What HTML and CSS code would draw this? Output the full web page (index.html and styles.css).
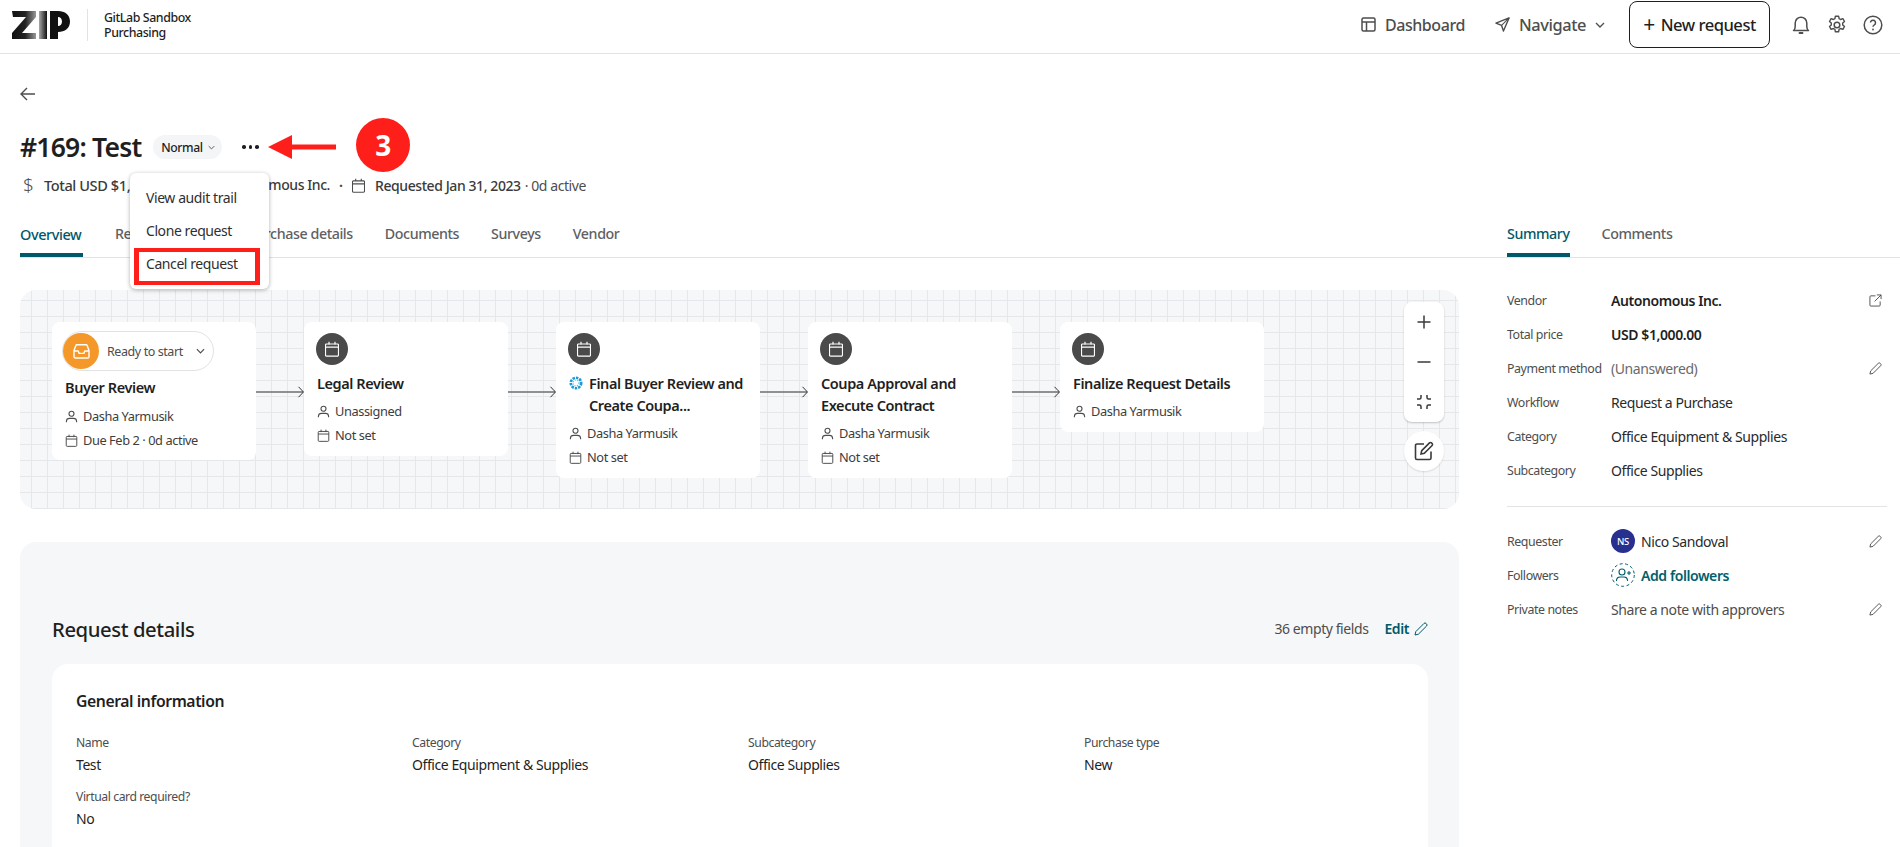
FILE: index.html
```html
<!DOCTYPE html>
<html lang="en">
<head>
<meta charset="utf-8">
<title>#169: Test</title>
<link rel="stylesheet" href="styles.css">
</head>
<body>
<svg class="sprite" aria-hidden="true">
  <defs>
    <linearGradient id="zipA" x1="0" y1="0" x2="1" y2="0"><stop offset="0" stop-color="#111"/><stop offset=".55" stop-color="#222"/><stop offset="1" stop-color="#999"/></linearGradient>
    <linearGradient id="zipB" x1="0" y1="0" x2="1" y2="0"><stop offset="0" stop-color="#aaa"/><stop offset="1" stop-color="#111"/></linearGradient>
    <symbol id="cal" viewBox="0 0 14 16"><path d="M1.5 3h11a1 1 0 0 1 1 1v10a1.2 1.2 0 0 1-1.2 1.2H1.7A1.2 1.2 0 0 1 .5 14V4a1 1 0 0 1 1-1zM.5 6.2h13M4 .8v3M10 .8v3" fill="none" stroke="currentColor" stroke-width="1.2"/></symbol>
    <symbol id="person" viewBox="0 0 14 14"><circle cx="7" cy="4" r="2.7" fill="none" stroke="currentColor" stroke-width="1.2"/><path d="M1.5 13.2v-1a3.4 3.4 0 0 1 3.4-3.2h4.2a3.4 3.4 0 0 1 3.4 3.2v1" fill="none" stroke="currentColor" stroke-width="1.2"/></symbol>
    <symbol id="pencil" viewBox="0 0 14 14"><path d="M1 13l.8-3.4L10 1.4a1.4 1.4 0 0 1 2 0l.6.6a1.4 1.4 0 0 1 0 2L4.400 12.200z" fill="none" stroke="currentColor" stroke-width="1"/></symbol>
    <symbol id="chev" viewBox="0 0 10 6"><path d="M1 1l4 4 4-4" fill="none" stroke="currentColor" stroke-width="1.300"/></symbol>
    <symbol id="flow" viewBox="0 0 48 12"><path d="M0 6h47" stroke="#6e6e6e" stroke-width="1.500"/><path d="M42.500 .8L47.500 6l-5 5.200" fill="none" stroke="#333" stroke-width="1"/></symbol>
  </defs>
</svg>

<div class="app">
  <header class="topbar">
    <div class="brand">
      <svg class="logo" viewBox="0 0 58 28" role="img" aria-label="Zip">
        <path d="M0 0h24v6L10 22h14v6H0v-6L14 6H1z" fill="url(#zipA)"/>
        <rect x="27" y="0" width="8" height="28" fill="url(#zipB)"/>
        <path d="M38 0h8c7 0 12 4 12 10.500S53 21 46 21v-6c2.500 0 4-1.800 4-4.500S48.500 6 46 6v22h-8z" fill="#111"/>
      </svg>
      <div class="org">
        <span>GitLab Sandbox</span>
        <span>Purchasing</span>
      </div>
    </div>
    <nav class="topnav">
      <a class="navlink navlink-dash">
        <svg class="ic15" viewBox="0 0 15 15"><rect x="1" y="1" width="13" height="13" rx="1.500" fill="none" stroke="currentColor" stroke-width="1.500"/><path d="M1 5h13M5.500 5v9" fill="none" stroke="currentColor" stroke-width="1.500"/></svg>
        Dashboard
      </a>
      <a class="navlink navlink-nav">
        <svg class="ic15" viewBox="0 0 16 16"><path d="M15 1L1 6.500l6 2.500 2 6z" fill="none" stroke="currentColor" stroke-width="1.500" stroke-linejoin="round"/><path d="M7 9l8-8" stroke="currentColor" stroke-width="1.200"/></svg>
        Navigate
        <svg class="chev-nav"><use href="#chev"/></svg>
      </a>
      <button class="newreq"><span class="plus">+</span>New request</button>
      <div class="tools">
        <svg class="tool" viewBox="0 0 20 20"><path d="M2.500 15.500c1.300-1 1.700-2.300 1.700-4V8a5.800 5.800 0 0 1 11.600 0v3.500c0 1.700.4 3 1.700 4z" fill="none" stroke="currentColor" stroke-width="1.500" stroke-linejoin="round"/><path d="M8.500 18h3" stroke="currentColor" stroke-width="1.800" stroke-linecap="round"/></svg>
        <svg class="tool" viewBox="0 0 20 20"><circle cx="10" cy="10" r="2.800" fill="none" stroke="currentColor" stroke-width="1.500"/><path d="M8.400 1.200h3.200l.5 2.400 1.500.9 2.300-.8 1.600 2.800-1.800 1.600v1.800l1.800 1.600-1.600 2.800-2.300-.8-1.500.9-.5 2.400H8.400l-.5-2.400-1.500-.9-2.300.8-1.600-2.800 1.800-1.600V8.100L2.500 6.500l1.600-2.800 2.300.8 1.500-.9z" fill="none" stroke="currentColor" stroke-width="1.400" stroke-linejoin="round"/></svg>
        <svg class="tool" viewBox="0 0 20 20"><circle cx="10" cy="10" r="8.800" fill="none" stroke="currentColor" stroke-width="1.500"/><path d="M7.500 7.600a2.500 2.500 0 1 1 3.800 2.200c-.9.500-1.300 1-1.300 2" fill="none" stroke="currentColor" stroke-width="1.500"/><circle cx="10" cy="14.500" r=".9" fill="currentColor"/></svg>
      </div>
    </nav>
  </header>

  <section class="head">
    <div class="back">
      <svg class="back-ic" viewBox="0 0 16 14"><path d="M15 7H1.500M7 1L1 7l6 6" fill="none" stroke="currentColor" stroke-width="1.400"/></svg>
    </div>
    <div class="titlerow">
      <h1 class="title">#169: Test</h1>
      <span class="priority">Normal<svg class="chev-sm"><use href="#chev"/></svg></span>
      <span class="dots"><i></i><i></i><i></i></span>
    </div>
    <div class="meta">
      <span class="dollar">$</span>
      <b class="meta-total"><span class="meta-total-a">Total USD $1,000.00</span><span class="meta-total-b">Autonomous Inc.</span></b>
      <span class="meta-sep">·</span>
      <svg class="meta-cal"><use href="#cal"/></svg>
      <b>Requested Jan 31, 2023</b>
      <span class="meta-age">· 0d active</span>
    </div>
  </section>

  <div class="tabbar">
    <div class="tabs">
      <a class="tab tab-first active">Overview</a>
      <a class="tab tab-hidden">Request form</a>
      <a class="tab">Purchase details</a>
      <a class="tab">Documents</a>
      <a class="tab">Surveys</a>
      <a class="tab">Vendor</a>
    </div>
    <div class="tabs">
      <a class="tab active">Summary</a>
      <a class="tab">Comments</a>
    </div>
  </div>

  <div class="columns">
    <main class="maincol">
      <section class="canvas">
        <article class="node node-first">
          <div class="status">
            <span class="status-ic">
              <svg class="inbox" viewBox="0 0 18 16"><path d="M1 7l2-5.500a1 1 0 0 1 1-.7h10a1 1 0 0 1 1 .7L17 7v6.500a1.500 1.500 0 0 1-1.500 1.500h-13A1.500 1.500 0 0 1 1 13.500zM1 7.500h4.500l1 2.500h5l1-2.500H17" fill="none" stroke="#fff" stroke-width="1.500" stroke-linejoin="round"/></svg>
            </span>
            <span class="status-txt">Ready to start</span>
            <svg class="chev-status"><use href="#chev"/></svg>
          </div>
          <h3 class="node-title">Buyer Review</h3>
          <div class="row"><svg class="row-ic"><use href="#person"/></svg>Dasha Yarmusik</div>
          <div class="row"><svg class="row-ic"><use href="#cal"/></svg>Due Feb 2 · 0d active</div>
        </article>
        <svg class="link"><use href="#flow"/></svg>
        <article class="node">
          <span class="badge"><svg class="badge-ic"><use href="#cal"/></svg></span>
          <h3 class="node-title">Legal Review</h3>
          <div class="row"><svg class="row-ic"><use href="#person"/></svg>Unassigned</div>
          <div class="row"><svg class="row-ic"><use href="#cal"/></svg>Not set</div>
        </article>
        <svg class="link"><use href="#flow"/></svg>
        <article class="node">
          <span class="badge"><svg class="badge-ic"><use href="#cal"/></svg></span>
          <div class="title-logo">
            <svg class="coupa" viewBox="0 0 14 14"><circle cx="7" cy="7" r="5.200" fill="none" stroke="#1c9ad6" stroke-width="2.600" stroke-dasharray="2.400 1.000"/><circle cx="7" cy="7" r="3" fill="none" stroke="#5cc0ea" stroke-width="1.200" stroke-dasharray="1.200 1.300"/></svg>
            <h3 class="node-title node-title-flush">Final Buyer Review and Create Coupa...</h3>
          </div>
          <div class="row"><svg class="row-ic"><use href="#person"/></svg>Dasha Yarmusik</div>
          <div class="row"><svg class="row-ic"><use href="#cal"/></svg>Not set</div>
        </article>
        <svg class="link"><use href="#flow"/></svg>
        <article class="node">
          <span class="badge"><svg class="badge-ic"><use href="#cal"/></svg></span>
          <h3 class="node-title">Coupa Approval and Execute Contract</h3>
          <div class="row"><svg class="row-ic"><use href="#person"/></svg>Dasha Yarmusik</div>
          <div class="row"><svg class="row-ic"><use href="#cal"/></svg>Not set</div>
        </article>
        <svg class="link"><use href="#flow"/></svg>
        <article class="node">
          <span class="badge"><svg class="badge-ic"><use href="#cal"/></svg></span>
          <h3 class="node-title">Finalize Request Details</h3>
          <div class="row"><svg class="row-ic"><use href="#person"/></svg>Dasha Yarmusik</div>
        </article>

        <div class="controls">
          <div class="zoomers">
            <svg class="ctl" viewBox="0 0 16 16"><path d="M8 1.500v13M1.500 8h13" stroke="currentColor" stroke-width="1.500"/></svg>
            <svg class="ctl" viewBox="0 0 16 16"><path d="M1.500 8h13" stroke="currentColor" stroke-width="1.500"/></svg>
            <svg class="ctl" viewBox="0 0 16 16"><path d="M1 5h2.500a1.500 1.500 0 0 0 1.500-1.500V1M15 5h-2.500A1.500 1.500 0 0 1 11 3.500V1M1 11h2.500A1.500 1.500 0 0 1 5 12.500V15M15 11h-2.500a1.500 1.500 0 0 0-1.500 1.500V15" fill="none" stroke="currentColor" stroke-width="1.500"/></svg>
          </div>
          <div class="editfab">
            <svg class="ctl-edit" viewBox="0 0 20 20"><path d="M10 3H3a1.500 1.500 0 0 0-1.500 1.500V17A1.500 1.500 0 0 0 3 18.500h12.500A1.500 1.500 0 0 0 17 17v-6.500" fill="none" stroke="currentColor" stroke-width="1.600"/><path d="M7 13l.7-3.300L15.500 1.900a1.400 1.400 0 0 1 2 0l.6.600a1.400 1.400 0 0 1 0 2l-7.800 7.800z" fill="none" stroke="currentColor" stroke-width="1.600"/></svg>
          </div>
        </div>
      </section>

      <section class="details">
        <div class="details-head">
          <h2 class="details-title">Request details</h2>
          <div class="details-tools">
            <span class="empty">36 empty fields</span>
            <a class="edit">Edit<svg class="ic-edit"><use href="#pencil"/></svg></a>
          </div>
        </div>
        <div class="infocard">
          <h3 class="info-title">General information</h3>
          <div class="fields">
            <div class="field"><span class="f-label">Name</span><span class="f-value">Test</span></div>
            <div class="field"><span class="f-label">Category</span><span class="f-value">Office Equipment &amp; Supplies</span></div>
            <div class="field"><span class="f-label">Subcategory</span><span class="f-value">Office Supplies</span></div>
            <div class="field"><span class="f-label">Purchase type</span><span class="f-value">New</span></div>
            <div class="field"><span class="f-label">Virtual card required?</span><span class="f-value">No</span></div>
          </div>
        </div>
      </section>
    </main>

    <aside class="side">
      <dl class="sum">
        <div class="sum-row"><dt>Vendor</dt><dd class="strong">Autonomous Inc.</dd>
          <svg class="sum-ic" viewBox="0 0 14 14"><path d="M7 2H2a1 1 0 0 0-1 1v9a1 1 0 0 0 1 1h9a1 1 0 0 0 1-1V8M6 8l7-7M8.500 1H13v4.500" fill="none" stroke="currentColor" stroke-width="1"/></svg>
        </div>
        <div class="sum-row"><dt>Total price</dt><dd class="strong">USD $1,000.00</dd></div>
        <div class="sum-row"><dt>Payment method</dt><dd class="muted">(Unanswered)</dd><svg class="sum-ic"><use href="#pencil"/></svg></div>
        <div class="sum-row"><dt>Workflow</dt><dd>Request a Purchase</dd></div>
        <div class="sum-row"><dt>Category</dt><dd>Office Equipment &amp; Supplies</dd></div>
        <div class="sum-row"><dt>Subcategory</dt><dd>Office Supplies</dd></div>
      </dl>
      <hr class="rule">
      <dl class="sum">
        <div class="sum-row"><dt>Requester</dt><dd class="with-av"><span class="avatar">NS</span>Nico Sandoval</dd><svg class="sum-ic"><use href="#pencil"/></svg></div>
        <div class="sum-row"><dt>Followers</dt><dd class="with-av addf">
          <svg class="avatar-add" viewBox="0 0 24 24"><circle cx="12" cy="12" r="11.300" fill="none" stroke="#00606b" stroke-width="1" stroke-dasharray="3 2.500"/><circle cx="11" cy="9" r="3" fill="none" stroke="#00606b" stroke-width="1.100"/><path d="M5.500 18v-1a3.500 3.500 0 0 1 3.500-3h4a3.500 3.500 0 0 1 3.500 3v1M16 10h4M18 8v4" fill="none" stroke="#00606b" stroke-width="1.100"/></svg>
          Add followers</dd></div>
        <div class="sum-row"><dt>Private notes</dt><dd class="note">Share a note with approvers</dd><svg class="sum-ic"><use href="#pencil"/></svg></div>
      </dl>
    </aside>
  </div>

  <div class="menu">
    <a class="menu-item">View audit trail</a>
    <a class="menu-item">Clone request</a>
    <a class="menu-item menu-hl">Cancel request</a>
  </div>

  <div class="callout">
    <svg class="callout-arrow" viewBox="0 0 68 24"><path d="M0 12L24 0v9.500h44v5H24V24z" fill="#ff1f1a"/></svg>
    <span class="callout-num">3</span>
  </div>
</div>
</body>
</html>
```
FILE: styles.css
```css
*, *::before, *::after { box-sizing: border-box; }
html, body { margin: 0; padding: 0; }
body {
  font-family: "Noto Sans", "Liberation Sans", sans-serif;
  color: #1f1f1f;
  background: #fff;
  font-size: 14px;
  letter-spacing: -0.03em;
}
.sprite { position: absolute; width: 0; height: 0; }
.app { position: relative; width: 1900px; height: 847px; overflow: hidden; }
h1, h2, h3, dl, dd { margin: 0; }
a { color: inherit; }

/* top bar */
.topbar {
  height: 54px;
  display: flex;
  justify-content: space-between;
  align-items: center;
  border-bottom: 1px solid #e2e3e5;
  padding: 0 17px 4px 12px;
}
.brand { display: flex; align-items: center; }
.logo { width: 58px; height: 28px; }
.org {
  margin-left: 17px;
  padding-left: 16px;
  border-left: 1px solid #e2e3e5;
  height: 32px;
  display: flex;
  flex-direction: column;
  justify-content: center;
  font-size: 12.400px;
  line-height: 15px;
  font-weight: 500;
}
.topnav { display: flex; align-items: center; }
.navlink {
  display: flex;
  align-items: center;
  font-size: 16.400px;
  font-weight: 500;
  color: #4d4d4d;
}
.navlink-dash { font-size: 16px; }
.ic15 { width: 15px; height: 15px; margin-right: 9px; }
.navlink-nav { margin-left: 30px; }
.chev-nav { width: 10px; height: 6px; margin-left: 9px; }
.newreq {
  margin-left: 24px;
  width: 141px;
  height: 47px;
  border: 1px solid #1f1f1f;
  border-radius: 8px;
  background: #fff;
  font: 500 16.600px "Noto Sans", sans-serif;
  letter-spacing: -0.03em;
  color: #1f1f1f;
  display: flex;
  align-items: center;
  justify-content: center;
  padding: 0;
}
.plus { font-size: 21px; margin-right: 6px; font-weight: 400; line-height: 1; }
.tools { display: flex; align-items: center; gap: 16px; margin-left: 21px; color: #4d4d4d; }
.tool { width: 20px; height: 20px; }

/* head */
.head { padding-left: 20px; }
.back { margin-top: 28px; height: 24px; display: flex; align-items: center; color: #4d4d4d; }
.back-ic { width: 16px; height: 14px; }
.titlerow { margin-top: 21px; height: 40px; display: flex; align-items: center; }
.title { font-size: 26.500px; font-weight: 600; line-height: 40px; letter-spacing: -0.03em; }
.priority {
  margin-left: 12px;
  height: 24px;
  width: 69px;
  border-radius: 12px;
  background: #f4f5f6;
  font-size: 12.200px;
  font-weight: 500;
  display: flex;
  align-items: center;
  justify-content: center;
}
.chev-sm { width: 7px; height: 5px; margin-left: 5px; color: #4d4d4d; }
.dots { margin-left: 20px; display: flex; gap: 3px; }
.dots i { width: 3.500px; height: 3.500px; border-radius: 50%; background: #1f1f1f; }
.meta {
  margin-top: 6px;
  height: 24px;
  display: flex;
  align-items: center;
  font-size: 14px;
  color: #4d4d4d;
}
.meta b { font-weight: 500; color: #3b3b3b; }
.dollar { font-size: 19px; font-weight: 300; width: 24px; padding-left: 3px; }
.meta-total { width: 286px; display: flex; justify-content: space-between; white-space: nowrap; }
.meta-total-a { font-size: 14.600px; }
.meta-sep { width: 22px; padding-left: 9px; font-weight: 700; }
.meta-cal { width: 13px; height: 15px; margin-right: 10px; }
.meta-age { margin-left: 4px; }

/* tabs */
.tabbar {
  margin: 19px 0 0 20px;
  height: 42px;
  display: grid;
  grid-template-columns: 1487px 1fr;
  border-bottom: 1px solid #e2e3e5;
}
.tabs { display: flex; gap: 32px; }
.tab {
  height: 41px;
  padding: 6px 0 7px;
  line-height: 24px;
  border-bottom: 4px solid transparent;
  font-size: 14.250px;
  font-weight: 500;
  color: #5f6062;
}
.tab.active { color: #00596a; border-bottom-color: #00596a; }
.tab-first { width: 63px; font-size: 14.500px; }
.tab-hidden { width: 101px; white-space: nowrap; overflow: hidden; }

/* columns */
.columns {
  display: grid;
  grid-template-columns: 1439px 380px;
  column-gap: 48px;
  padding-left: 20px;
}
.maincol { padding-top: 32px; }

/* canvas */
.canvas {
  position: relative;
  height: 219px;
  padding: 32px;
  display: flex;
  align-items: flex-start;
  border-radius: 16px;
  background-color: #f6f7f9;
  background-image:
    linear-gradient(to right, #e5e7ea 1px, transparent 1px),
    linear-gradient(to bottom, #e5e7ea 1px, transparent 1px);
  background-size: 16px 16px;
  background-position: 11px 10px;
}
.node {
  width: 204px;
  flex: none;
  padding: 11px 12px 9px 13px;
  background: #fff;
  border-radius: 8px;
}
.node-first { padding: 9px 12px 8px 13px; }
.link { width: 48px; height: 12px; flex: none; margin-top: 64px; }
.status {
  margin-left: -3px;
  width: 152px;
  height: 40px;
  display: flex;
  align-items: center;
  border: 1px solid #e1e2e4;
  border-radius: 20px;
  padding-left: 0;
}
.status-ic {
  width: 36px; height: 36px;
  border-radius: 50%;
  background: #f5982a;
  display: flex; align-items: center; justify-content: center;
}
.inbox { width: 17px; height: 15px; }
.status-txt { margin-left: 8px; font-size: 12.500px; color: #4d4d4d; white-space: nowrap; }
.chev-status { width: 9px; height: 6px; margin-left: 13px; color: #4d4d4d; }
.badge {
  margin-left: -1px;
  width: 32px; height: 32px;
  border-radius: 50%;
  background: #4a4a4a;
  color: #fff;
  display: flex; align-items: center; justify-content: center;
}
.badge-ic { width: 14px; height: 16px; }
.node-title {
  margin-top: 7px;
  font-size: 14.500px;
  line-height: 22px;
  font-weight: 600;
}
.node-first .node-title { margin-top: 5px; }
.node-first .node-title + .row { margin-top: 6px; }
.node-title-flush { margin-top: 0; }
.title-logo { margin-top: 7px; display: flex; gap: 6px; align-items: flex-start; }
.coupa { width: 14px; height: 14px; flex: none; margin-top: 4px; }
.row {
  height: 24px;
  display: flex;
  align-items: center;
  font-size: 12.800px;
  color: #3d3d3d;
  white-space: nowrap;
}
.node-title + .row, .title-logo + .row { margin-top: 5px; }
.row-ic { width: 13px; height: 13px; margin-right: 5px; flex: none; color: #4d4d4d; }

/* canvas controls */
.controls {
  position: absolute;
  top: 12px;
  right: 15px;
  width: 40px;
  display: flex;
  flex-direction: column;
  gap: 9px;
}
.zoomers {
  height: 120px;
  background: #fff;
  border-radius: 8px;
  box-shadow: 0 1px 2px rgba(0,0,0,.22);
  color: #3a3a3a;
  display: flex;
  flex-direction: column;
  align-items: center;
  justify-content: space-around;
}
.ctl { width: 16px; height: 16px; }
.editfab {
  height: 40px;
  border-radius: 50%;
  background: #fff;
  box-shadow: 0 1px 2px rgba(0,0,0,.12);
  color: #3a3a3a;
  display: flex; align-items: center; justify-content: center;
}
.ctl-edit { width: 20px; height: 20px; }

/* request details */
.details {
  margin-top: 33px;
  padding: 70px 31px 80px 32px;
  background: #f6f7f9;
  border-radius: 16px;
}
.details-head { height: 33px; display: flex; justify-content: space-between; align-items: center; }
.details-title { font-size: 20.300px; font-weight: 500; }
.details-tools { display: flex; align-items: center; font-size: 14px; }
.empty { color: #4d4d4d; }
.edit { margin-left: 16px; color: #00596a; font-weight: 600; display: flex; align-items: center; }
.ic-edit { width: 14px; height: 14px; margin-left: 5px; }
.infocard {
  margin-top: 19px;
  padding: 25px 24px 120px;
  background: #fff;
  border-radius: 16px;
}
.info-title { font-size: 15.750px; font-weight: 600; line-height: 24px; }
.fields {
  margin-top: 21px;
  display: grid;
  grid-template-columns: repeat(4, 336px);
  row-gap: 12px;
}
.field { display: flex; flex-direction: column; }
.f-label { font-size: 12.200px; line-height: 18px; color: #4d4d4d; }
.f-value { margin-top: 2px; font-size: 14px; line-height: 22px; }

/* sidebar */
.side { padding-top: 25px; }
.sum-row { height: 34px; display: flex; align-items: center; position: relative; }
.sum-row dt { width: 104px; font-size: 12.400px; color: #4d4d4d; white-space: nowrap; }
.sum-row dd { flex: 1; font-size: 14px; color: #2a2a2a; }
dd.strong { font-weight: 600; color: #1f1f1f; }
dd.muted { color: #6a6a6a; }
dd.note { color: #4d4d4d; }
.sum-ic { width: 13px; height: 13px; margin-right: 5px; color: #4d4d4d; flex: none; }
.rule { margin: 19px 0 17px; border: 0; border-top: 1px solid #e2e3e5; }
.with-av { display: flex; align-items: center; gap: 6px; }
.avatar {
  width: 24px; height: 24px;
  border-radius: 50%;
  background: #272f8f;
  color: #fff;
  font-size: 9.500px;
  font-weight: 500;
  display: flex; align-items: center; justify-content: center;
}
.avatar-add { width: 24px; height: 24px; }
dd.addf { color: #00606b; font-weight: 600; }

/* overlays */
.menu {
  position: absolute;
  left: 130px;
  top: 173px;
  width: 139px;
  height: 116px;
  padding: 8px 0 0;
  background: #fff;
  border-radius: 6px;
  box-shadow: 0 1px 4px rgba(0,0,0,.32);
}
.menu-item {
  display: block;
  position: relative;
  height: 33px;
  line-height: 33px;
  padding-left: 16px;
  font-size: 14px;
  color: #2f2f2f;
}
.menu-hl::after {
  content: "";
  position: absolute;
  left: 4px;
  top: 1px;
  width: 126px;
  height: 37px;
  border: solid #ff1f1a;
  border-width: 4px 5px;
}
.callout { position: absolute; left: 268px; top: 118px; display: flex; align-items: flex-start; }
.callout-arrow { width: 68px; height: 24px; margin-top: 17px; }
.callout-num {
  margin-left: 20px;
  width: 54px;
  height: 54px;
  border-radius: 50%;
  background: #ff1f1a;
  color: #fff;
  font-size: 28px;
  font-weight: 700;
  line-height: 54px;
  text-align: center;
}
```
